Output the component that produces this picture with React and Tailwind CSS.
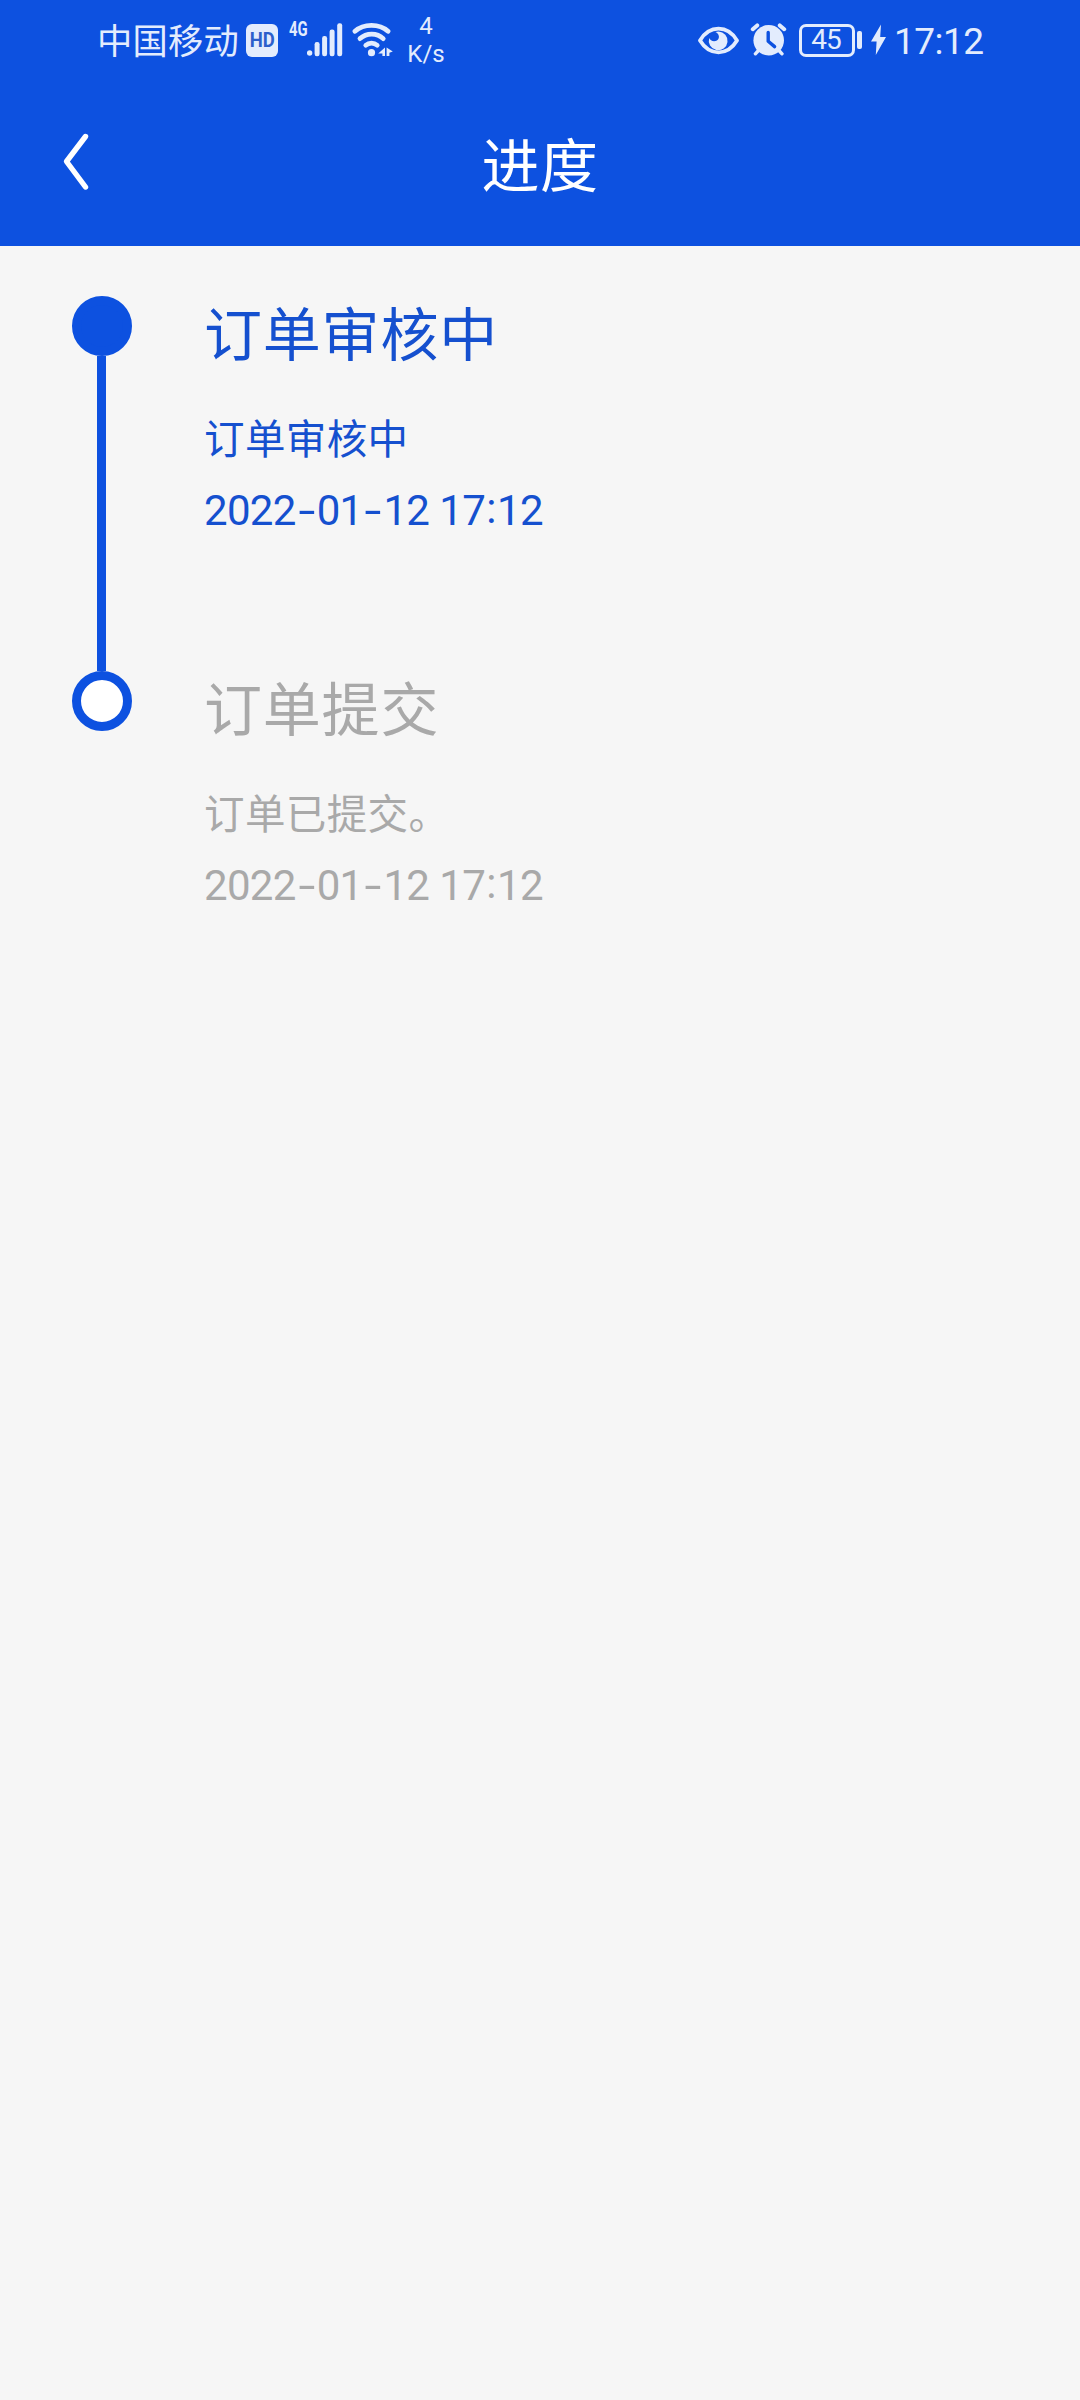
import React from "react";

const steps = [
  {
    title: "订单审核中",
    desc: "订单审核中",
    date: "2022-01-12",
    time: "17:12",
    active: true,
  },
  {
    title: "订单提交",
    desc: "订单已提交。",
    date: "2022-01-12",
    time: "17:12",
    active: false,
  },
];

const SignalIcon = () => (
  <svg className="w-[36px] h-[34px] shrink-0" viewBox="307 22 36 34" fill="currentColor">
    <circle cx="309.6" cy="52" r="2.7" />
    <rect x="314.6" y="41" width="5" height="14.2" rx="2.2" />
    <rect x="322.1" y="35" width="5" height="20.2" rx="2.2" />
    <rect x="329.6" y="28.5" width="5" height="26.7" rx="2.2" />
    <rect x="337.2" y="22.2" width="5" height="33" rx="2.2" />
  </svg>
);

const WifiIcon = () => (
  <svg className="w-[42px] h-[36px] shrink-0" viewBox="352 21 42 36">
    <g fill="none" stroke="currentColor" strokeWidth="4.8" strokeLinecap="round">
      <path d="M355 30.3C363.5 22.4 379.5 22.4 388 30.3" />
      <path d="M360 37.6C366.5 31.5 377 31.5 383.2 37.6" />
      <path d="M365.8 44.2C369 41.4 374 41.4 377.2 44.2" />
    </g>
    <circle cx="371.5" cy="51.7" r="3.6" fill="currentColor" />
    <path d="M385 46.5V55H382.4V52.4H378.2ZM386.6 46.5L392.8 50.6L389.4 51.8V55H386.6Z" fill="currentColor" />
  </svg>
);

const EyeIcon = () => (
  <svg className="w-[42px] h-[30px] shrink-0" viewBox="698 24 42 30">
    <path
      d="M700 39.5C709.5 23.8 727.5 23.8 737 39.5C727.5 55.2 709.5 55.2 700 39.5Z"
      fill="none"
      stroke="currentColor"
      strokeWidth="3.8"
      strokeLinejoin="round"
    />
    <path
      d="M718.5 30.4A9.4 9.4 0 1 1 709.2 37C710.5 41 717.3 41.4 718.8 37C719.5 34.5 718 32 715.4 31Z"
      fill="currentColor"
    />
  </svg>
);

const AlarmIcon = () => (
  <svg className="w-[38px] h-[34px] shrink-0" viewBox="750 23 38 34">
    <circle cx="768.7" cy="40.3" r="15.3" fill="currentColor" />
    <g fill="none" stroke="currentColor" strokeWidth="4" strokeLinecap="round">
      <path d="M752.8 29.2L757.2 25.4M784.2 29.2L779.8 25.4" />
      <path d="M758 51L755.4 53.8M779.4 51L782 53.8" strokeWidth="3.4" />
    </g>
    <path
      d="M768.2 32.5V41.2L774.6 46.6"
      fill="none"
      stroke="#0d51e0"
      strokeWidth="3.4"
      strokeLinecap="round"
      strokeLinejoin="round"
    />
  </svg>
);

const StatusBar = () => (
  <div className="flex h-20 items-center pl-[97px] pr-[95px] text-[#e3ecfd]">
    <span className="w-[149px] pb-[3px] text-[35.3px] leading-[60px] tracking-[0.2px] whitespace-nowrap">
      中国移动
    </span>
    <span className="flex h-[33px] w-[32px] items-center justify-center rounded-[6px] bg-[#e3ecfd] font-['Roboto'] text-[21px] font-bold leading-none text-[#2c5fcb]">
      <span className="scale-x-[0.88]">HD</span>
    </span>
    <span className="ml-[11px] w-[18px] pb-[22px] font-['Roboto'] text-[20px] font-bold leading-none">
      <span className="inline-block origin-left scale-x-[0.74]">4G</span>
    </span>
    <SignalIcon />
    <span className="w-[9px]" />
    <WifiIcon />
    <span className="ml-[14px] flex w-[36px] flex-col items-center font-['Roboto'] text-[24px] leading-[28px]">
      <span>4</span>
      <span>K/s</span>
    </span>
    <span className="ml-auto flex items-center">
      <EyeIcon />
      <span className="w-[10px]" />
      <AlarmIcon />
      <span className="ml-[11px] flex h-[33px] w-[56px] items-center justify-center rounded-[7px] border-[3px] border-current pr-[2px] font-['Roboto'] text-[28px] leading-none tracking-[-1px]">
        45
      </span>
      <span className="ml-[2px] h-[18px] w-[5px] rounded-[2px] bg-current" />
      <svg className="ml-[9px] h-[32px] w-[15px]" viewBox="0 0 15 32" fill="currentColor">
        <path d="M10 0.5L0 17.5H5.6L4.8 31L15 13H9.2Z" />
      </svg>
      <span className="ml-[8px] flex w-[91px] pt-[3px] font-['Roboto'] text-[37px] leading-[60px] tracking-[-0.5px]">
        17:12
      </span>
    </span>
  </div>
);

const Header = () => (
  <header className="h-[246px] bg-[#0d51e0]">
    <StatusBar />
    <div className="grid h-[163px] grid-cols-[1fr_auto_1fr] items-center">
      <svg
        className="ml-[60px] h-[60px] w-[30px]"
        viewBox="0 0 30 60"
        fill="none"
        stroke="white"
        strokeWidth="5.4"
        strokeLinecap="round"
        strokeLinejoin="round"
      >
        <path d="M25.5 4.5L6.5 29.5L25.5 55" />
      </svg>
      <h1 className="text-[58px] leading-[68px] tracking-[0.5px] text-white">进度</h1>
    </div>
  </header>
);

const StepDate = ({ date, time }) => (
  <p className="mt-[14px] flex font-['Roboto'] text-[42px] leading-[60px] tracking-[-0.7px]">
    {date.split("-").map((part, index) => (
      <span key={part} className="flex">
        {index > 0 && (
          <span className="flex w-[21px] justify-center">
            <span className="scale-x-[1.45]">-</span>
          </span>
        )}
        {part}
      </span>
    ))}
    <span className="ml-[10px] flex">
      {time.split(":").map((part, index) => (
        <span key={part} className="flex">
          {index > 0 && (
            <span className="flex w-[12px] -translate-y-[2px] justify-center">:</span>
          )}
          {part}
        </span>
      ))}
    </span>
  </p>
);

const Step = ({ step, last }) => (
  <li className={`flex ${last ? "" : "h-[375px]"}`}>
    <div className="flex w-[60px] flex-col items-center">
      <span
        className={`h-[60px] w-[60px] shrink-0 rounded-full border-[9px] border-[#0d51e0] ${
          step.active ? "bg-[#0d51e0]" : "bg-white"
        }`}
      />
      {!last && <span className="mr-[1px] w-[9px] flex-1 bg-[#0d51e0]" />}
    </div>
    <div className={`ml-[72px] pt-[1px] ${step.active ? "text-[#1550cf]" : "text-[#a9a9a9]"}`}>
      <h2 className="text-[58px] leading-[68px] tracking-[0.8px]">{step.title}</h2>
      <p className="mt-[42px] text-[40.5px] leading-[60px] tracking-[0.4px]">{step.desc}</p>
      <StepDate date={step.date} time={step.time} />
    </div>
  </li>
);

const App = () => {
  return (
    <div className="h-[2400px] w-[1080px] bg-[#f6f6f6] font-['Noto_Sans_CJK_SC',sans-serif]">
      <Header />
      <ul className="pl-[72px] pt-[50px]">
        {steps.map((step, index) => (
          <Step key={step.title} step={step} last={index === steps.length - 1} />
        ))}
      </ul>
    </div>
  );
};

export default App;
